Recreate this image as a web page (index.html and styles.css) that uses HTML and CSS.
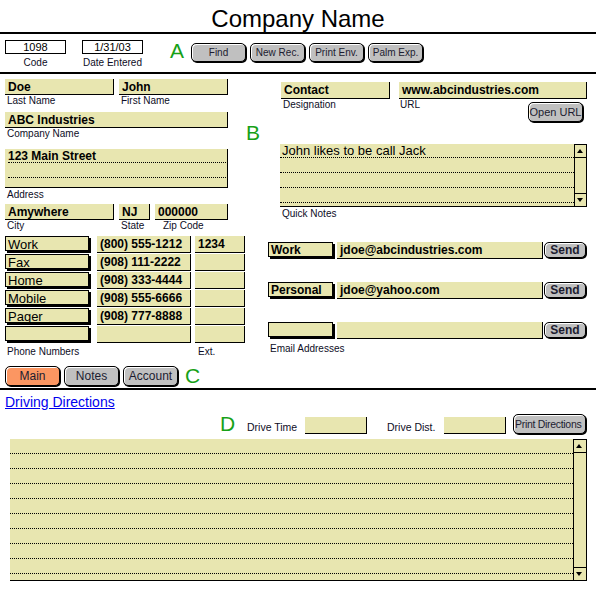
FILE: index.html
```html
<!DOCTYPE html>
<html lang="en">
<head>
    <meta charset="UTF-8">
    <meta name="viewport" content="width=device-width, initial-scale=1.0">
    <title>Company Name - Contact</title>
    <link rel="stylesheet" href="styles.css">
</head>
<body>
    <!-- Page title -->
    <h1 class="title">Company Name</h1>

    <!-- Record info and the toolbar buttons (A) -->
    <div class="toolbar">
        <div class="meta">
            <div class="meta-box">1098</div>
            <div class="meta-label">Code</div>
        </div>
        <div class="meta meta-date">
            <div class="meta-box">1/31/03</div>
            <div class="meta-label">Date Entered</div>
        </div>
        <span class="marker marker-a">A</span>
        <button class="btn tool-btn">Find</button>
        <button class="btn tool-btn">New Rec.</button>
        <button class="btn tool-btn">Print Env.</button>
        <button class="btn tool-btn">Palm Exp.</button>
    </div>

    <!-- Main contact details (B) -->
    <div class="main">
        <div class="col-left">
            <div class="row">
                <div class="w-name">
                    <div class="fld">Doe</div>
                    <div class="lbl">Last Name</div>
                </div>
                <div class="w-name">
                    <div class="fld">John</div>
                    <div class="lbl">First Name</div>
                </div>
            </div>

            <div class="block-company">
                <div class="fld">ABC Industries</div>
                <div class="lbl">Company Name</div>
            </div>

            <div class="block-address">
                <div class="fld fld-lines">
                    <div class="line line-first">123 Main Street</div>
                    <div class="line"></div>
                </div>
                <div class="lbl lbl-address">Address</div>
            </div>

            <div class="row row-city">
                <div class="w-name">
                    <div class="fld">Amywhere</div>
                    <div class="lbl">City</div>
                </div>
                <div class="w-state">
                    <div class="fld">NJ</div>
                    <div class="lbl">State</div>
                </div>
                <div class="w-zip">
                    <div class="fld">000000</div>
                    <div class="lbl lbl-zip">Zip Code</div>
                </div>
            </div>

            <!-- Phone list -->
            <div class="phones">
                <div class="phone-row">
                    <div class="phone-type">Work</div>
                    <div class="fld phone-num">(800) 555-1212</div>
                    <div class="fld phone-ext">1234</div>
                </div>
                <div class="phone-row">
                    <div class="phone-type">Fax</div>
                    <div class="fld phone-num">(908) 111-2222</div>
                    <div class="fld phone-ext"></div>
                </div>
                <div class="phone-row">
                    <div class="phone-type">Home</div>
                    <div class="fld phone-num">(908) 333-4444</div>
                    <div class="fld phone-ext"></div>
                </div>
                <div class="phone-row">
                    <div class="phone-type">Mobile</div>
                    <div class="fld phone-num">(908) 555-6666</div>
                    <div class="fld phone-ext"></div>
                </div>
                <div class="phone-row">
                    <div class="phone-type">Pager</div>
                    <div class="fld phone-num">(908) 777-8888</div>
                    <div class="fld phone-ext"></div>
                </div>
                <div class="phone-row">
                    <div class="phone-type"></div>
                    <div class="fld phone-num"></div>
                    <div class="fld phone-ext"></div>
                </div>
            </div>
            <div class="phone-labels">
                <span class="lbl lbl-phones">Phone Numbers</span>
                <span class="lbl lbl-ext">Ext.</span>
            </div>
        </div>

        <div class="col-mid">
            <span class="marker">B</span>
        </div>

        <div class="col-right">
            <div class="row row-contact">
                <div class="fld w-contact">Contact</div>
                <div class="fld w-url">www.abcindustries.com</div>
            </div>
            <div class="row row-url">
                <span class="lbl lbl-designation">Designation</span>
                <span class="lbl lbl-url">URL</span>
                <button class="btn btn-open">Open URL</button>
            </div>

            <!-- Quick notes with its scroll bar -->
            <div class="memo memo-notes">
                <div class="memo-lines">
                    <div class="line line-first notes-text">John likes to be call Jack</div>
                    <div class="line"></div>
                    <div class="line"></div>
                    <div class="line"></div>
                </div>
                <div class="scroll">
                    <div class="arrow arrow-up"></div>
                    <div class="arrow arrow-down"></div>
                </div>
            </div>
            <div class="lbl lbl-notes">Quick Notes</div>

            <!-- Email list -->
            <div class="emails">
                <div class="email-row">
                    <div class="email-type">Work</div>
                    <div class="fld email-addr">jdoe@abcindustries.com</div>
                    <button class="btn btn-send">Send</button>
                </div>
                <div class="email-row">
                    <div class="email-type">Personal</div>
                    <div class="fld email-addr">jdoe@yahoo.com</div>
                    <button class="btn btn-send">Send</button>
                </div>
                <div class="email-row">
                    <div class="email-type"></div>
                    <div class="fld email-addr"></div>
                    <button class="btn btn-send">Send</button>
                </div>
            </div>
            <div class="lbl lbl-emails">Email Addresses</div>
        </div>
    </div>

    <!-- Layout tabs (C) -->
    <div class="tabs">
        <button class="btn tab tab-active">Main</button>
        <button class="btn tab">Notes</button>
        <button class="btn tab">Account</button>
        <span class="marker marker-c">C</span>
    </div>

    <!-- Driving directions (D) -->
    <div class="directions">
        <div class="dir-head"><a href="#" class="dir-link">Driving Directions</a></div>
        <div class="drive-row">
            <span class="marker marker-d">D</span>
            <span class="lbl drive-lbl drive-time">Drive Time</span>
            <div class="fld drive-box"></div>
            <span class="lbl drive-lbl drive-dist">Drive Dist.</span>
            <div class="fld drive-box"></div>
            <button class="btn btn-print">Print Directions</button>
        </div>
        <div class="memo memo-directions">
            <div class="memo-lines">
                <div class="line"></div>
                <div class="line"></div>
                <div class="line"></div>
                <div class="line"></div>
                <div class="line"></div>
                <div class="line"></div>
                <div class="line"></div>
                <div class="line"></div>
                <div class="line"></div>
            </div>
            <div class="scroll">
                <div class="arrow arrow-up"></div>
                <div class="arrow arrow-down"></div>
            </div>
        </div>
    </div>
</body>
</html>
```

FILE: styles.css
```css
body {
    margin: 0;
    width: 596px;
    font-family: "Liberation Sans", Arial, sans-serif;
    color: #000;
    background-color: #fff;
}

/* ---- title and toolbar ---- */
.title {
    margin: 0;
    height: 34px;
    box-sizing: border-box;
    padding-top: 5px;
    font-size: 24px;
    font-weight: normal;
    line-height: 27px;
    text-align: center;
    border-bottom: 2px solid #000;
}

.toolbar {
    display: flex;
    align-items: flex-start;
    height: 40px;
    box-sizing: border-box;
    padding-left: 5px;
    border-bottom: 2px solid #000;
}

.meta {
    width: 61px;
    margin-top: 6px;
}

.meta-date {
    margin-left: 16px;
}

.meta-box {
    height: 14px;
    box-sizing: border-box;
    border: 1px solid #000;
    font-size: 11px;
    line-height: 12px;
    text-align: center;
}

.meta-label {
    margin-top: 3px;
    font-size: 10px;
    line-height: 12px;
    text-align: center;
    white-space: nowrap;
    color: #0d0d26;
}

.marker {
    font-size: 21px;
    line-height: 21px;
    color: #17a117;
}

.marker-a {
    margin: 6px 7px 0 27px;
}

/* grey rounded FileMaker style buttons */
.btn {
    margin: 0;
    padding: 0;
    font-family: "Liberation Sans", Arial, sans-serif;
    color: #1c1c30;
    background-color: #c0c0c0;
    border: 1px solid #000;
    border-radius: 5px;
    box-shadow: inset 1px 1px 0 #fff, 1px 1px 0 #000;
    white-space: nowrap;
    overflow: hidden;
}

.tool-btn {
    width: 55px;
    height: 19px;
    margin-top: 9px;
    margin-right: 4px;
    font-size: 10px;
}

/* ---- main details ---- */
.main {
    display: flex;
}

.col-left {
    width: 246px;
    box-sizing: border-box;
    padding: 5px 0 0 5px;
}

.col-mid {
    width: 22px;
    padding-top: 48px;
}

.col-right {
    width: 319px;
}

.row {
    display: flex;
    gap: 5px;
}

/* beige data field with a black right and bottom edge */
.fld {
    height: 16px;
    box-sizing: border-box;
    padding-left: 3px;
    background-color: #e8e6b0;
    border-right: 1px solid #000;
    border-bottom: 1px solid #000;
    font-size: 12px;
    font-weight: bold;
    line-height: 16px;
    white-space: nowrap;
    overflow: hidden;
}

.lbl {
    display: block;
    padding-left: 2px;
    font-size: 10px;
    line-height: 12px;
    color: #0d0d26;
    white-space: nowrap;
}

.w-name {
    width: 109px;
}

.w-state {
    width: 31px;
}

.w-zip {
    width: 73px;
}

.lbl-zip {
    padding-left: 8px;
}

.block-company {
    width: 223px;
    margin-top: 5px;
}

.block-address {
    width: 223px;
    margin-top: 9px;
}

.fld-lines {
    height: 39px;
    padding-right: 1px;
}

.line {
    height: 15px;
    box-sizing: border-box;
    border-bottom: 1px dotted #000;
    line-height: 14px;
}

.line-first {
    height: 14px;
}

.lbl-address {
    margin-top: 1px;
}

.row-city {
    margin-top: 3px;
}

/* phone numbers */
.phones {
    margin-top: 4px;
    display: flex;
    flex-direction: column;
    gap: 1px;
}

.phone-row {
    display: flex;
    height: 17px;
}

.phone-type {
    width: 84px;
    height: 15px;
    box-sizing: border-box;
    padding-left: 2px;
    background-color: #e8e6b0;
    border: 1px solid #000;
    box-shadow: 2px 2px 0 #000;
    font-size: 13px;
    line-height: 15px;
    overflow: hidden;
}

.phone-num {
    width: 94px;
    height: 17px;
    margin-left: 8px;
    line-height: 17px;
}

.phone-ext {
    width: 50px;
    height: 17px;
    margin-left: 4px;
    line-height: 17px;
}

.phone-labels {
    display: flex;
    margin-top: 3px;
}

.lbl-phones {
    width: 189px;
}

/* right column */
.row-contact {
    margin-top: 8px;
    padding-left: 13px;
    gap: 9px;
}

.w-contact {
    width: 109px;
    height: 17px;
    line-height: 17px;
}

.w-url {
    width: 188px;
    height: 17px;
    line-height: 17px;
}

.row-url {
    gap: 0;
    height: 24px;
    padding-left: 13px;
}

.lbl-designation {
    width: 115px;
}

.lbl-url {
    flex: 1;
}

.btn-open {
    width: 55px;
    height: 20px;
    margin: 3px 4px 0 0;
    font-size: 11px;
}

/* memo fields with dotted lines and a scroll bar */
.memo {
    display: flex;
    background-color: #e8e6b0;
    border-bottom: 1px solid #000;
    box-sizing: border-box;
}

.memo-lines {
    flex: 1;
}

.memo-notes {
    width: 307px;
    height: 63px;
    margin: 21px 0 0 12px;
}

.notes-text {
    padding-left: 2px;
    font-size: 13px;
}

.scroll {
    display: flex;
    flex-direction: column;
    justify-content: space-between;
    width: 13px;
    box-sizing: border-box;
    border: 1px solid #000;
    border-bottom: none;
}

.arrow {
    position: relative;
    height: 13px;
    box-sizing: border-box;
}

.arrow-up {
    border-bottom: 1px solid #000;
}

.arrow-down {
    border-top: 1px solid #000;
}

.arrow::before {
    content: "";
    position: absolute;
    left: 2px;
    top: 4px;
    border-left: 3.5px solid transparent;
    border-right: 3.5px solid transparent;
}

.arrow-up::before {
    border-bottom: 4px solid #000;
}

.arrow-down::before {
    border-top: 4px solid #000;
}

.lbl-notes {
    margin: 1px 0 0 12px;
}

/* email addresses */
.emails {
    margin-top: 22px;
    display: flex;
    flex-direction: column;
    gap: 23px;
}

.email-row {
    display: flex;
    height: 17px;
}

.email-type {
    width: 65px;
    height: 15px;
    box-sizing: border-box;
    padding-left: 2px;
    background-color: #e8e6b0;
    border: 1px solid #000;
    box-shadow: 2px 2px 0 #000;
    font-size: 12px;
    font-weight: bold;
    line-height: 14px;
}

.email-addr {
    width: 206px;
    height: 17px;
    margin-left: 4px;
    line-height: 17px;
}

.btn-send {
    width: 42px;
    height: 16px;
    margin-left: 1px;
    font-size: 12px;
    font-weight: bold;
    line-height: 14px;
}

.lbl-emails {
    margin-top: 4px;
}

/* ---- tabs ---- */
.tabs {
    display: flex;
    align-items: flex-start;
    gap: 4px;
    margin-top: 8px;
    padding: 0 0 2px 5px;
    border-bottom: 2px solid #000;
}

.tab {
    width: 55px;
    height: 20px;
    font-size: 12px;
}

.tab-active {
    background-color: #fb9662;
}

.marker-c {
    margin: -1px 0 0 3px;
}

/* ---- driving directions ---- */
.dir-head {
    margin-top: 4px;
    padding-left: 5px;
    font-size: 14px;
    line-height: 16px;
}

.dir-link {
    color: #0000ee;
}

.drive-row {
    display: flex;
    align-items: flex-start;
    margin-top: 4px;
    padding-left: 220px;
}

.marker-d {
    width: 27px;
    margin-top: -1px;
}

.drive-lbl {
    margin-top: 7px;
    padding-left: 0;
    font-size: 10.5px;
}

.drive-time {
    width: 58px;
}

.drive-dist {
    width: 57px;
    margin-left: 20px;
}

.drive-box {
    width: 62px;
    height: 17px;
    margin-top: 3px;
}

.btn-print {
    width: 73px;
    height: 20px;
    margin-left: 7px;
    padding-left: 1px;
    font-size: 10.5px;
    letter-spacing: -0.3px;
    text-align: left;
}

.memo-directions {
    width: 577px;
    height: 142px;
    margin: 5px 0 0 10px;
}

.memo-directions .scroll {
    width: 14px;
}
```
